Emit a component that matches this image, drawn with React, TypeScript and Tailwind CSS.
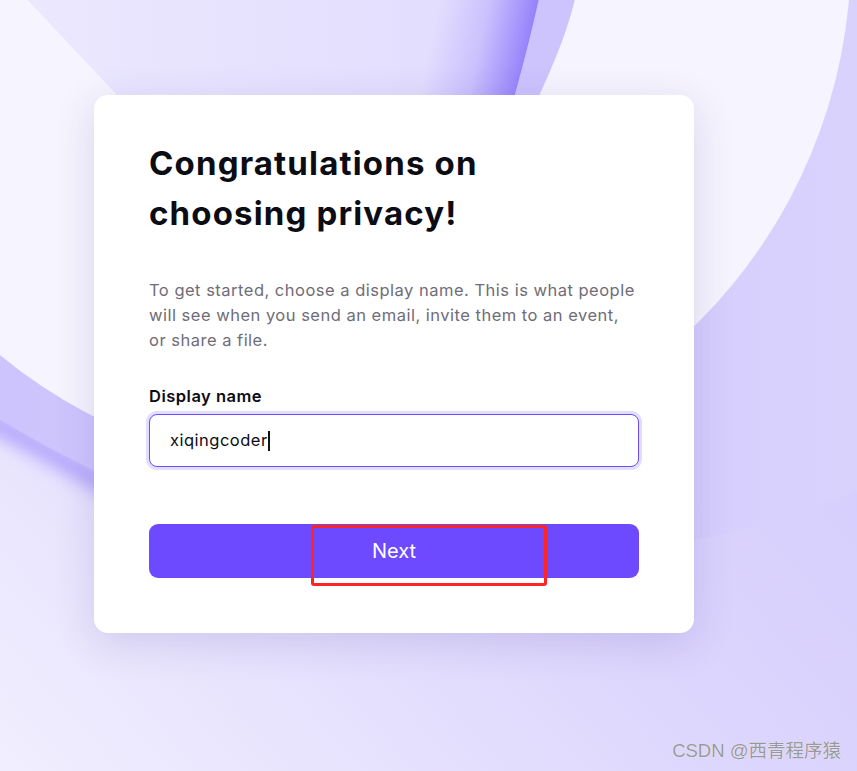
export default function App() {
  return (
    <div className="relative h-[771px] w-full overflow-hidden bg-[#e8e4fd] font-['Inter',sans-serif]">
      <svg
        className="absolute inset-0 h-full w-full"
        viewBox="0 0 857 771"
        preserveAspectRatio="none"
        aria-hidden="true"
      >
        <defs>
          <linearGradient id="base" x1="857" y1="0" x2="0" y2="771" gradientUnits="userSpaceOnUse">
            <stop offset="0" stopColor="#cfc6fc" />
            <stop offset="0.5" stopColor="#dcd5fd" />
            <stop offset="1" stopColor="#f1eefe" />
          </linearGradient>
          <linearGradient id="band" x1="0" y1="0" x2="857" y2="0" gradientUnits="userSpaceOnUse">
            <stop offset="0" stopColor="#cec4fd" />
            <stop offset="0.6" stopColor="#d3cbfd" />
            <stop offset="1" stopColor="#d9d2fd" />
          </linearGradient>
          <linearGradient id="sphere" x1="440" y1="0" x2="535" y2="21" gradientUnits="userSpaceOnUse">
            <stop offset="0" stopColor="#e3defe" />
            <stop offset="0.5" stopColor="#cbc1fd" />
            <stop offset="1" stopColor="#9481fb" />
          </linearGradient>
          <linearGradient id="sphereL" x1="0" y1="0" x2="440" y2="0" gradientUnits="userSpaceOnUse">
            <stop offset="0" stopColor="#ebe8fe" />
            <stop offset="1" stopColor="#e3defe" />
          </linearGradient>
          <filter id="blur8" x="-30%" y="-30%" width="160%" height="160%">
            <feGaussianBlur stdDeviation="9" />
          </filter>
        </defs>
        <rect x="0" y="0" width="857" height="771" fill="url(#base)" />
        {/* soft shadow cast below the outer band */}
        <path d="M -20 415 Q 50 452 140 505" stroke="#9a86fb" strokeWidth="18" fill="none" filter="url(#blur8)" opacity="0.75" />
        {/* outer band */}
        <circle cx="500" cy="-400" r="960" fill="url(#band)" />
        {/* big light circle */}
        <circle cx="331" cy="-46" r="520" fill="#f6f4fe" />
        {/* inner ring band */}
        <path d="M 300 -10 L 577 -10 Q 566 45 522 130 L 300 130 Z" fill="#cdc3fd" />
        {/* sphere */}
        <path d="M 22 -6 L 150 130 L 505 130 Q 528 50 540 -6 Z" fill="url(#sphereL)" />
        <path d="M 400 -6 L 400 130 L 505 130 Q 528 50 540 -6 Z" fill="url(#sphere)" />
      </svg>

      <div className="relative pl-[94px] pt-[95px]">
        <div className="w-[600px] rounded-[14px] bg-white px-[55px] pb-[55px] pt-[43px] shadow-[0_10px_40px_rgba(70,50,150,0.16)]">
          <h1 className="max-w-[420px] text-[33px] font-bold leading-[50px] tracking-[0.035em] text-[#0c0c14]">
            Congratulations on choosing privacy!
          </h1>
          <p className="mt-[40px] text-[16.5px] leading-[25px] tracking-[0.03em] text-[#6f6c79]">
            To get started, choose a display name. This is what people will see when you send an email, invite them to an event, or share a file.
          </p>
          <div className="mt-[31px] text-[16.5px] font-semibold leading-[24px] tracking-[0.03em] text-[#0c0c14]">Display name</div>
          <div className="mt-[6px] flex h-[53px] items-center rounded-[8px] border border-[#6d4aff] bg-white px-[20px] text-[16.5px] tracking-[0.03em] text-[#0c0c14] shadow-[0_0_0_3px_#e3ddff]">
            <span>xiqingcoder</span>
            <span className="inline-block h-[20px] w-[2px] bg-[#111111]" />
          </div>
          <div className="relative mt-[57px]">
            <button
              type="button"
              className="flex h-[54px] w-full items-center justify-center rounded-[9px] bg-[#6d4aff] text-[20px] text-white"
            >
              Next
            </button>
            <div className="pointer-events-none absolute left-[162px] top-[1px] h-[61px] w-[236px] rounded-[3px] border-[3px] border-[#ff2424]" />
          </div>
        </div>
      </div>

      <div className="absolute bottom-[6px] right-[16px] font-['Liberation_Sans','Noto_Sans_CJK_SC',sans-serif] text-[18.5px] text-[#999999] [text-shadow:0_0_1px_#ffffff]">
        CSDN @西青程序猿
      </div>
    </div>
  );
}
